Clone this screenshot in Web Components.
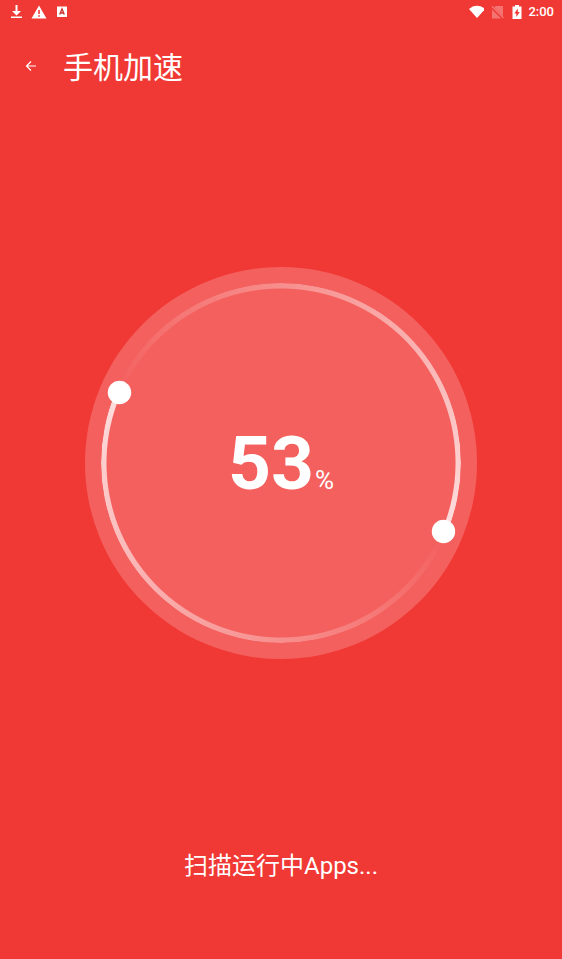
<!DOCTYPE html>
<html lang="zh-CN">
<head>
<meta charset="utf-8">
<meta name="viewport" content="width=device-width, initial-scale=1">
<title>手机加速</title>
<style>
  html, body {
    margin: 0;
    height: 100%;
  }

  body {
    background: #f03834;
    color: #fff;
    font-family: Roboto, "Noto Sans CJK SC", sans-serif;
  }
</style>
</head>
<body>
<boost-screen>
  <status-bar slot="status" time="2:00"></status-bar>
  <title-bar slot="header">手机加速</title-bar>
  <scan-gauge value="53"></scan-gauge>
  <span slot="message">扫描运行中Apps...</span>
</boost-screen>

<script>
class StatusBar extends HTMLElement {
  constructor() {
    super();
    this.attachShadow({ mode: 'open' });
  }

  connectedCallback() {
    this.shadowRoot.innerHTML = `
      <style>
        :host {
          display: flex;
          justify-content: space-between;
          align-items: center;
          height: 24px;
          padding: 0 8px;
        }

        .group {
          display: flex;
          align-items: center;
          gap: 7px;
        }

        .right {
          gap: 4px;
        }

        svg {
          display: block;
          width: 16px;
          height: 16px;
          fill: #fff;
        }

        .dim {
          opacity: 0.3;
        }

        time {
          font-size: 13px;
          font-weight: 500;
          line-height: 16px;
        }
      </style>

      <div class="group">
        <svg viewBox="0 0 16 16" aria-hidden="true"><path d="M7.500 1h2v6h3.500l-4.500 4.500L4 7h3.500zM3 12.500h11V14H3z"/></svg>
        <svg viewBox="0 0 16 16" aria-hidden="true"><path fill-rule="evenodd" d="M8 1.500 15.500 14.500H.500zM7.200 6v4h1.600V6zm0 5.200v1.600h1.600v-1.600z"/></svg>
        <svg viewBox="0 0 16 16" aria-hidden="true"><path d="M3 2.500h10V13H3z"/><path fill="none" stroke="#c8302d" stroke-width="1.300" d="m5.700 10.500 2.300-5.500 2.300 5.500M6.500 9h3"/></svg>
      </div>
      <div class="group right">
        <svg viewBox="0 0 16 16" aria-hidden="true"><path d="M1 5C5.500.500 12.500.500 17 5L9 14z"/></svg>
        <svg class="dim" viewBox="0 0 16 16" aria-hidden="true"><path d="M7.500 2H15v10.500L6.300 3.600zM4 5.500l9 9H4z"/><path d="m3.300 2.700 1-1L16 13.500l-1 1z"/></svg>
        <svg viewBox="0 0 16 16" aria-hidden="true"><path fill-rule="evenodd" d="M7 1h4v1.500h2.500V15h-9V2.500H7zM9.800 4.500 6.300 9.500h2V13l3.500-5h-2z"/></svg>
        <time>${this.getAttribute('time')}</time>
      </div>
    `;
  }
}

class TitleBar extends HTMLElement {
  constructor() {
    super();
    this.attachShadow({ mode: 'open' });
    this.shadowRoot.innerHTML = `
      <style>
        :host {
          display: flex;
          align-items: center;
          gap: 16px;
          height: 84px;
          padding: 0 15px;
        }

        button {
          display: flex;
          align-items: center;
          justify-content: center;
          width: 32px;
          height: 32px;
          padding: 0;
          border: 0;
          background: none;
          color: inherit;
          cursor: pointer;
        }

        svg {
          width: 12px;
          height: 12px;
          fill: none;
          stroke: currentColor;
          stroke-width: 1.200;
        }

        h1 {
          margin: 0;
          padding-top: 4px;
          font-size: 30px;
          font-weight: 400;
          line-height: 40px;
        }
      </style>

      <button type="button" aria-label="返回">
        <svg viewBox="0 0 12 12"><path d="M11 6H2M6 1.500 1.500 6 6 10.500"/></svg>
      </button>
      <h1><slot></slot></h1>
    `;
  }
}

class ScanGauge extends HTMLElement {
  constructor() {
    super();
    this.attachShadow({ mode: 'open' });
  }

  connectedCallback() {
    this.shadowRoot.innerHTML = `
      <style>
        :host {
          display: grid;
          place-items: center;
          width: 392px;
          max-width: 90%;
          aspect-ratio: 1;
          border-radius: 50%;
          background: #f4605e;
        }

        .ring, svg, .value {
          grid-area: 1 / 1;
        }

        /* two comet tails, each fading over half a turn */
        .ring {
          width: 92%;
          height: 92%;
          border-radius: 50%;
          background: conic-gradient(from 113deg,
            rgba(255, 255, 255, 0), rgba(255, 255, 255, 0.8) 50%,
            rgba(255, 255, 255, 0) 50%, rgba(255, 255, 255, 0.8));
          -webkit-mask: radial-gradient(closest-side, transparent calc(100% - 6px), #000 calc(100% - 5px));
          mask: radial-gradient(closest-side, transparent calc(100% - 6px), #000 calc(100% - 5px));
        }

        svg {
          width: 100%;
          height: 100%;
          fill: #fff;
        }

        .value {
          display: flex;
          align-items: baseline;
          gap: 1px;
        }

        .number {
          font-size: 75px;
          font-weight: 700;
          line-height: 80px;
        }

        .unit {
          font-size: 26px;
          line-height: 32px;
        }
      </style>

      <div class="ring"></div>
      <svg viewBox="0 0 392 392" aria-hidden="true">
        <circle cx="34.500" cy="125.500" r="11.700"/>
        <circle cx="358.500" cy="264.500" r="11.700"/>
      </svg>
      <div class="value">
        <span class="number">${this.getAttribute('value')}</span><span class="unit">%</span>
      </div>
    `;
  }
}

class BoostScreen extends HTMLElement {
  constructor() {
    super();
    this.attachShadow({ mode: 'open' });
    this.shadowRoot.innerHTML = `
      <style>
        :host {
          display: flex;
          flex-direction: column;
          min-height: 100%;
        }

        main {
          flex: 1;
          display: flex;
          flex-direction: column;
          align-items: center;
          justify-content: center;
          padding-bottom: 8px;
        }

        footer {
          padding: 24px 16px 77px;
          font-size: 24px;
          line-height: 32px;
          text-align: center;
        }
      </style>

      <slot name="status"></slot>
      <slot name="header"></slot>
      <main><slot></slot></main>
      <footer><slot name="message"></slot></footer>
    `;
  }
}

customElements.define('status-bar', StatusBar);
customElements.define('title-bar', TitleBar);
customElements.define('scan-gauge', ScanGauge);
customElements.define('boost-screen', BoostScreen);
</script>
</body>
</html>
